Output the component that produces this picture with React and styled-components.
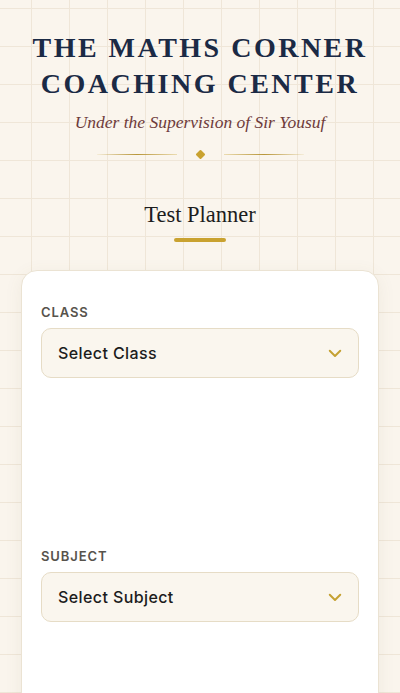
import styled, { createGlobalStyle } from "styled-components";

const GlobalStyle = createGlobalStyle`
    html, body {
        margin: 0;
        padding: 0;
    }
    body {
        background-color: #faf5ed;
        background-image:
            linear-gradient(to right, #efe6d8 1px, transparent 1px),
            linear-gradient(to bottom, #efe6d8 1px, transparent 1px);
        background-size: 38px 38px;
        background-position: -7px 8px;
        font-family: "Inter", "Noto Sans", sans-serif;
        min-height: 693px;
    }
`

const Page = styled.div`
    display: flex;
    flex-direction: column;
    align-items: center;
    padding: 30px 21px 0;
    overflow: hidden;
    height: 663px;
`

const Title = styled.h1`
    margin: 0;
    font-family: "Liberation Serif", "DejaVu Serif", serif;
    font-weight: 700;
    font-size: 28px;
    line-height: 36px;
    letter-spacing: 2.5px;
    color: #1b2a45;
    text-align: center;
`

const Subtitle = styled.p`
    margin: 9px 0 0;
    font-family: "Liberation Serif", serif;
    font-style: italic;
    font-size: 17.5px;
    line-height: 22px;
    color: #6e3b3b;
`

const Ornament = styled.div`
    display: flex;
    align-items: center;
    gap: 20px;
    margin-top: 18px;
`

const Rule = styled.div`
    width: 80px;
    height: 1px;
    background: linear-gradient(
        ${p => (p.$flip ? "to left" : "to right")},
        rgba(201, 162, 39, 0.1),
        #b8963a 50%,
        rgba(201, 162, 39, 0.3)
    );
`

const Diamond = styled.div`
    width: 7px;
    height: 7px;
    background: #c9a230;
    transform: rotate(45deg);
    border-radius: 1px;
`

const SectionTitle = styled.h2`
    margin: 43px 0 0;
    font-family: "Liberation Serif", serif;
    font-weight: 400;
    font-size: 22.5px;
    line-height: 28px;
    color: #1d1d1d;
`

const Bar = styled.div`
    flex: none;
    width: 52px;
    height: 4px;
    border-radius: 2px;
    margin-top: 9px;
    background-color: #c9a230;
`

const Card = styled.section`
    align-self: stretch;
    margin-top: 28px;
    background: #ffffff;
    border: 1px solid #ebe3d3;
    border-radius: 16px;
    box-shadow: 0 4px 18px rgba(120, 100, 60, 0.08);
    padding: 33px 19px 120px;
    display: flex;
    flex-direction: column;
`

const Field = styled.div`
    display: flex;
    flex-direction: column;
    gap: 8px;
    margin-bottom: ${p => p.$space || 0}px;
`

const Label = styled.label`
    font-size: 13px;
    font-weight: 600;
    letter-spacing: 0.9px;
    color: #57534c;
    text-transform: uppercase;
`

const Select = styled.div`
    display: flex;
    align-items: center;
    justify-content: space-between;
    height: 48px;
    padding: 0 14px 0 16px;
    background: #faf6ee;
    border: 1px solid #e6dcc6;
    border-radius: 10px;
    font-size: 16px;
    font-weight: 500;
    letter-spacing: 0.4px;
    color: #1c1c1c;
`

const Chevron = () => (
    <svg width="18" height="18" viewBox="0 0 24 24" fill="none"
        stroke="#c4a132" strokeWidth="2.6" strokeLinecap="round" strokeLinejoin="round">
        <path d="M5 9l7 7 7-7" />
    </svg>
)

function App() {
    return (
    <>
        <GlobalStyle />
        <Page>
            <Title>THE MATHS CORNER<br />COACHING CENTER</Title>
            <Subtitle>Under the Supervision of Sir Yousuf</Subtitle>
            <Ornament>
                <Rule />
                <Diamond />
                <Rule $flip />
            </Ornament>
            <SectionTitle>Test Planner</SectionTitle>
            <Bar />
            <Card>
                <Field $space={170}>
                    <Label>Class</Label>
                    <Select>Select Class<Chevron /></Select>
                </Field>
                <Field>
                    <Label>Subject</Label>
                    <Select>Select Subject<Chevron /></Select>
                </Field>
            </Card>
        </Page>
    </>
    )
}

export default App;
